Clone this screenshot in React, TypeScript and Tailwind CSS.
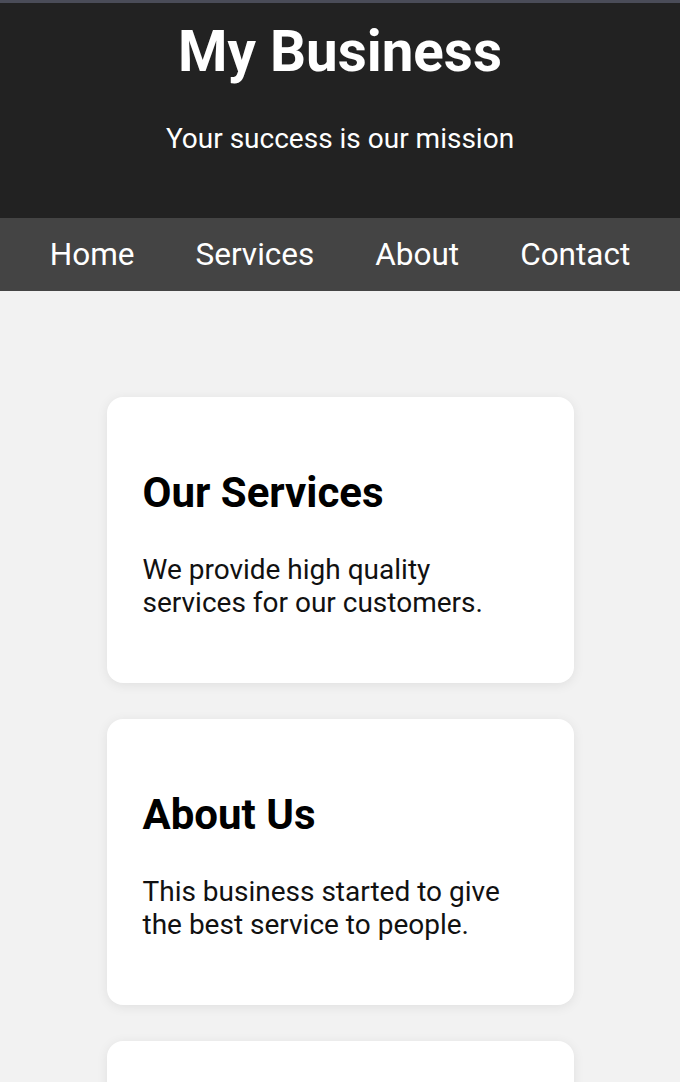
const links = ["Home", "Services", "About", "Contact"];

const cards = [
  {
    title: "Our Services",
    text: "We provide high quality services for our customers.",
  },
  {
    title: "About Us",
    text: "This business started to give the best service to people.",
  },
  {
    title: "Contact",
    text: "Get in touch with us today.",
  },
];

const App = () => {
  return (
    <div className="min-h-screen bg-[#f2f2f2] font-['Roboto',sans-serif]">
      <div className="h-[3px] bg-[#4a4c58]" />
      <header className="bg-[#222222] text-white text-center h-[215px] pt-[15px]">
        <h1 className="text-[56.5px] font-bold leading-[68px]">My Business</h1>
        <p className="mt-[36px] text-[28px] leading-[33px]">Your success is our mission</p>
      </header>

      <nav className="bg-[#444444] h-[73px] flex items-center justify-center gap-[61px]">
        {links.map((link) => (
          <a key={link} className="text-white text-[31.5px] leading-none">
            {link}
          </a>
        ))}
      </nav>

      <main className="pt-[106px] flex flex-col items-center gap-[36px]">
        {cards.map((card) => (
          <section
            key={card.title}
            className="w-[467px] h-[286px] bg-white rounded-[16px] shadow-[0_2px_12px_rgba(0,0,0,0.08)] px-[36px] pt-[71px]"
          >
            <h2 className="text-[42px] font-bold leading-[49px] text-black">{card.title}</h2>
            <p className="mt-[36px] text-[28px] leading-[33px] text-[#111111]">{card.text}</p>
          </section>
        ))}
      </main>
    </div>
  );
};

export default App;
